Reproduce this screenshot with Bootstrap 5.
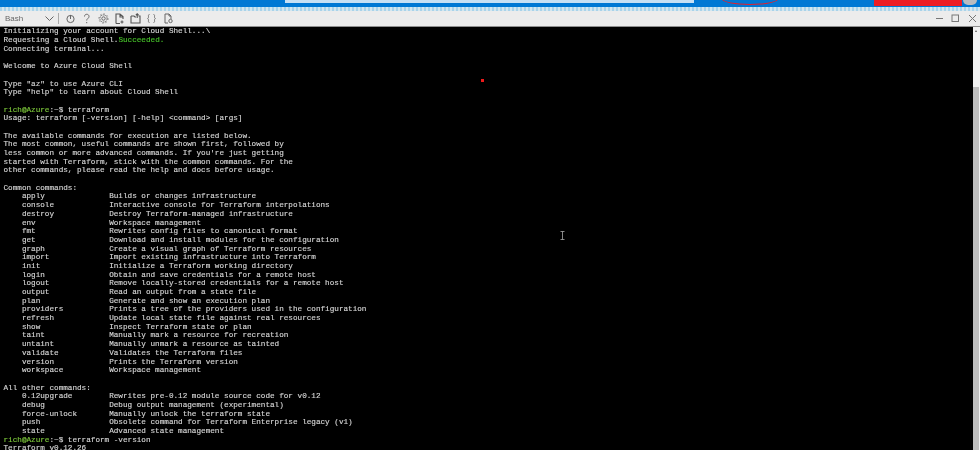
<!DOCTYPE html>
<html lang="en">
<head>
<meta charset="utf-8">
<title>Azure Cloud Shell</title>
<link rel="stylesheet" href="https://cdn.jsdelivr.net/npm/bootstrap@5.3.0/dist/css/bootstrap.min.css">
<style>
html,body{height:450px;overflow:hidden;background:#000}
.portal-top{height:7px;background:#0078d4;position:relative;flex:none}
.top-search{width:409px;height:3px;background:#c7e0f4;margin-left:285px}
.top-alert{width:88px;height:6px;background:#ed1c24;margin-left:auto}
.top-avatar{width:14px;height:5px;background:#b8bcc0;border-radius:0 0 7px 7px;margin-left:1px;margin-right:3px}
.top-ring{position:absolute;left:722px;top:-7px;width:56px;height:12px;border:1.5px solid #e3202c;border-radius:50%}
.grad-strip{height:4px;flex:none;background:repeating-linear-gradient(90deg,#a9d3ea 0 2px,#d3e6ef 2px 4px)}
.tool-bar{background:#ececec;border-bottom:1px solid #8f8f8f;flex:none;height:16px}
.shell-label{font-family:"Liberation Sans",sans-serif;font-size:8px;color:#666;margin-left:5px;width:39px;filter:blur(.25px)}
.tool-ico{width:11px;height:11px;color:#666;flex:none;filter:blur(.25px)}
.tool-gap{width:5.3px;flex:none}
.tool-sep{width:1px;height:11px;background:#aaa;margin:0 6px 0 3px}
.win-ctrls{gap:5.5px;margin-right:2.5px}
.term-pane{background:#000;flex:1;min-height:0;overflow:hidden}
.term-text{margin:0;padding:.4px 0 0 3.5px;font-family:"Liberation Mono",monospace;font-size:7.67px;line-height:8.69px;color:#d4d4d4;-webkit-text-stroke:.15px #d4d4d4;white-space:pre;overflow:hidden;filter:blur(.3px)}
.ok-green{color:#46c02a;-webkit-text-stroke-color:#46c02a}
.prompt-green{color:#7cc63a;-webkit-text-stroke-color:#7cc63a}
.scroll-side{width:7px;background:#f1f1f1;position:relative;flex:none}
.scroll-thumb{position:absolute;left:0;right:1px;top:60px;bottom:0;background:#bdbdbd}
.scroll-arrow{position:absolute;left:2px;top:3px;border:1.5px solid transparent;border-bottom:2px solid #555;border-top:0}
.red-dot{position:absolute;left:481px;top:79px;width:3px;height:3px;background:#f01a1a}
.i-cursor{position:absolute;left:559px;top:231px;width:7px;height:9px;color:#a8a8a8}
</style>
</head>
<body>
<div class="d-flex flex-column position-relative" style="height:450px">
  <div class="portal-top d-flex align-items-start">
    <div class="top-search"></div>
    <div class="top-ring"></div>
    <div class="top-alert"></div>
    <div class="top-avatar"></div>
  </div>
  <div class="grad-strip"></div>
  <div class="tool-bar d-flex align-items-center">
    <span class="shell-label">Bash</span>
    <svg class="tool-ico" viewBox="0 0 11 11" fill="none" stroke="currentColor"><path d="M1.500 3.500l4 4 4-4"/></svg>
    <span class="tool-sep"></span>
    <svg class="tool-ico" viewBox="0 0 11 11" fill="none" stroke="currentColor"><circle cx="5.500" cy="6" r="3.600"/><path d="M5.500 2v4"/></svg>
    <span class="tool-gap"></span>
    <svg class="tool-ico" viewBox="0 0 11 11" fill="none" stroke="currentColor"><path d="M3.500 3.500c0-3 4.500-3 4.500 0 0 2-2.300 2-2.300 4M5.700 9v1.200"/></svg>
    <span class="tool-gap"></span>
    <svg class="tool-ico" viewBox="0 0 11 11" fill="none" stroke="currentColor"><circle cx="5.500" cy="5.500" r="1.700"/><circle cx="5.500" cy="5.500" r="3.600" stroke-dasharray="1.500 .8"/><circle cx="5.500" cy="5.500" r="4.600" stroke-dasharray="1.500 2" stroke-width=".8"/></svg>
    <span class="tool-gap"></span>
    <svg class="tool-ico" viewBox="0 0 11 11" fill="none" stroke="#555"><path d="M2 10.500V1h4l3 2.500V6M2 10.500h4M6 1v3h3M8 7.500v3M6.500 9h3" stroke-width="1.100"/></svg>
    <span class="tool-gap"></span>
    <svg class="tool-ico" viewBox="0 0 11 11" fill="none" stroke="#555"><path d="M1 3h3l1 1h1M1 3v7h9V3H8.500M7.200 5V1M5.800 2.200L7.200 .8l1.400 1.400" stroke-width="1.100"/></svg>
    <span class="tool-gap"></span>
    <svg class="tool-ico" viewBox="0 0 11 11" fill="none" stroke="#777"><path d="M3.500 1.500c-1.500 0-1 1.500-1 2.500S2 5.500 1.500 5.500c.5 0 1 .5 1 1.500s-.5 2.500 1 2.500M7.500 1.500c1.500 0 1 1.500 1 2.500s.5 1.500 1 1.500c-.5 0-1 .5-1 1.500s.5 2.500-1 2.500"/></svg>
    <span class="tool-gap"></span>
    <svg class="tool-ico" viewBox="0 0 11 11" fill="none" stroke="#666"><path d="M5 10H2V1h4l2 2v3M6 1v2h2"/><circle cx="7.500" cy="8" r="1.700"/></svg>
    <div class="ms-auto d-flex align-items-center win-ctrls">
      <svg class="tool-ico" viewBox="0 0 11 11" stroke="#777" fill="none"><path d="M2 5.500h7"/></svg>
      <svg class="tool-ico" viewBox="0 0 11 11" stroke="#777" fill="none"><rect x="2" y="2" width="6.500" height="6.500"/></svg>
      <svg class="tool-ico" viewBox="0 0 11 11" stroke="#777" fill="none"><path d="M2 2l7 7M9 2l-7 7"/></svg>
    </div>
  </div>
  <div class="d-flex flex-grow-1" style="min-height:0">
    <div class="term-pane">
<pre class="term-text">Initializing your account for Cloud Shell...\
Requesting a Cloud Shell.<span class="ok-green">Succeeded.</span>
Connecting terminal...

Welcome to Azure Cloud Shell

Type "az" to use Azure CLI
Type "help" to learn about Cloud Shell

<span class="prompt-green">rich@Azure</span>:~$ terraform
Usage: terraform [-version] [-help] &lt;command&gt; [args]

The available commands for execution are listed below.
The most common, useful commands are shown first, followed by
less common or more advanced commands. If you're just getting
started with Terraform, stick with the common commands. For the
other commands, please read the help and docs before usage.

Common commands:
    apply              Builds or changes infrastructure
    console            Interactive console for Terraform interpolations
    destroy            Destroy Terraform-managed infrastructure
    env                Workspace management
    fmt                Rewrites config files to canonical format
    get                Download and install modules for the configuration
    graph              Create a visual graph of Terraform resources
    import             Import existing infrastructure into Terraform
    init               Initialize a Terraform working directory
    login              Obtain and save credentials for a remote host
    logout             Remove locally-stored credentials for a remote host
    output             Read an output from a state file
    plan               Generate and show an execution plan
    providers          Prints a tree of the providers used in the configuration
    refresh            Update local state file against real resources
    show               Inspect Terraform state or plan
    taint              Manually mark a resource for recreation
    untaint            Manually unmark a resource as tainted
    validate           Validates the Terraform files
    version            Prints the Terraform version
    workspace          Workspace management

All other commands:
    0.12upgrade        Rewrites pre-0.12 module source code for v0.12
    debug              Debug output management (experimental)
    force-unlock       Manually unlock the terraform state
    push               Obsolete command for Terraform Enterprise legacy (v1)
    state              Advanced state management
<span class="prompt-green">rich@Azure</span>:~$ terraform -version
Terraform v0.12.26</pre>
    </div>
    <div class="scroll-side"><div class="scroll-arrow"></div><div class="scroll-thumb"></div></div>
  </div>
  <div class="red-dot"></div>
  <svg class="i-cursor" viewBox="0 0 7 9" fill="none" stroke="currentColor" stroke-width=".8"><path d="M1.500.5h4M1.500 8.500h4M3.500.5v8"/></svg>
</div>
<script src="https://cdn.jsdelivr.net/npm/bootstrap@5.3.0/dist/js/bootstrap.bundle.min.js"></script>
</body>
</html>
